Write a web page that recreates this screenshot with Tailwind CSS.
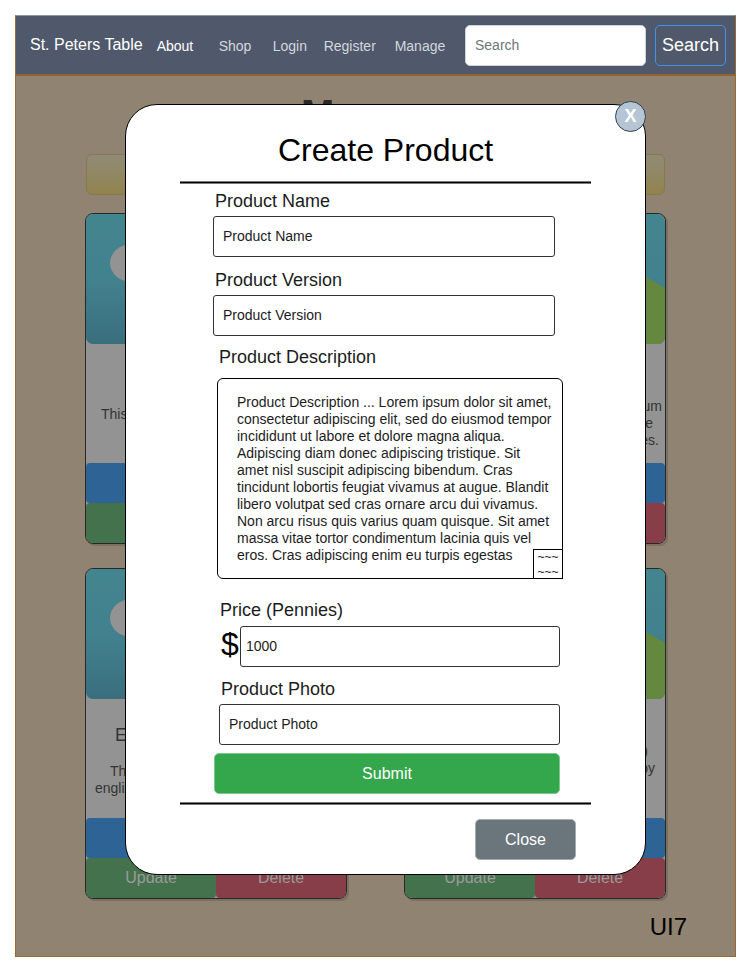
<!DOCTYPE html>
<html lang="en">
<head>
<meta charset="utf-8">
<title>St. Peters Table</title>
<script src="https://cdn.jsdelivr.net/npm/@tailwindcss/browser@4"></script>
</head>
<body class="bg-white p-[15px] font-['Liberation_Sans',Arial,sans-serif] text-[14px] text-black">
<div class="relative border border-[#986a2e] border-t-[#8b999d] bg-[#908372]">

  <header class="flex h-[60px] items-center border-b-2 border-[#93622f] bg-[#50596b] pl-[14px] pr-[9px]">
    <a href="#" class="shrink-0 text-[16px] text-white">St. Peters Table</a>
    <nav class="ml-[14px] flex shrink-0 pt-[2px] text-[#d3d7df]">
      <a href="#" class="w-[62px] text-white">About</a>
      <a href="#" class="w-[54px]">Shop</a>
      <a href="#" class="w-[51px]">Login</a>
      <a href="#" class="w-[71px]">Register</a>
      <a href="#" class="w-[51px]">Manage</a>
    </nav>
    <form class="ml-auto flex min-w-0 gap-[9px]">
      <input type="search" aria-label="Search" placeholder="Search" class="h-[41px] w-[181px] min-w-0 rounded-[5px] border border-[#ced4da] bg-white px-[9px] placeholder:text-[#6c757d]">
      <button type="button" class="h-[41px] w-[71px] shrink-0 rounded-[5px] border border-[#4093f0] text-[18px] text-white">Search</button>
    </form>
  </header>

  <main class="px-[69px] pt-[14px]">
    <h1 class="text-center text-[40px] font-bold leading-[48px] text-[#2b2827]">Manage</h1>
    <div class="mx-px mt-4 h-[41px] rounded-[6px] border border-[#87794f] bg-linear-to-b from-[#908b77] to-[#92834c]"></div>

    <div class="mt-[18px] grid grid-cols-2 gap-x-[57px] gap-y-6 text-[#333333]">
      <article class="flex h-[331px] flex-col overflow-hidden rounded-[8px] border border-[#26292a] bg-[#939393] shadow-[2px_2px_0_#7b7062]">
        <svg class="h-[130px] w-full shrink-0 rounded-[7px]" viewBox="0 0 260 130" preserveAspectRatio="none" aria-hidden="true">
          <defs><linearGradient id="sky" x1="0" y1="0" x2="0" y2="1"><stop offset="0" stop-color="#43858f"/><stop offset=".5" stop-color="#42818e"/><stop offset="1" stop-color="#3a6e7d"/></linearGradient></defs>
          <rect width="260" height="130" fill="url(#sky)"/><ellipse cx="46" cy="49" rx="22" ry="19" fill="#939393"/>
        </svg>
        <p class="grow pl-[15px] pt-[62px] leading-[17px]">This</p>
        <button type="button" class="h-10 rounded-[4px] bg-[#2e6396]" aria-label="View"></button>
        <div class="grid h-10 grid-cols-2 text-[16px] text-[#9a9a9a]"><button type="button" class="rounded-[4px] bg-[#44724d]">Update</button><button type="button" class="rounded-[4px] bg-[#873e49]">Delete</button></div>
      </article>

      <article class="flex h-[331px] flex-col overflow-hidden rounded-[8px] border border-[#26292a] bg-[#939393] shadow-[2px_2px_0_#7b7062]">
        <svg class="h-[130px] w-full shrink-0 rounded-[7px]" viewBox="0 0 260 130" preserveAspectRatio="none" aria-hidden="true">
          <rect width="260" height="130" fill="url(#sky)"/><path d="M130 130 Q180 30 241 63 L260 74 V130Z" fill="#65883f"/>
        </svg>
        <p class="grow pt-[54px] text-right leading-[17px]"><span class="block pr-[3px]">um</span><span class="block pr-[12px]">e</span><span class="block pr-[6px]">es.</span></p>
        <button type="button" class="h-10 rounded-[4px] bg-[#2e6396]" aria-label="View"></button>
        <div class="grid h-10 grid-cols-2 text-[16px] text-[#9a9a9a]"><button type="button" class="rounded-[4px] bg-[#44724d]">Update</button><button type="button" class="rounded-[4px] bg-[#873e49]">Delete</button></div>
      </article>

      <article class="flex h-[331px] flex-col overflow-hidden rounded-[8px] border border-[#26292a] bg-[#939393] shadow-[2px_2px_0_#7b7062]">
        <svg class="h-[130px] w-full shrink-0 rounded-[7px]" viewBox="0 0 260 130" preserveAspectRatio="none" aria-hidden="true">
          <rect width="260" height="130" fill="url(#sky)"/><ellipse cx="46" cy="49" rx="22" ry="19" fill="#939393"/>
        </svg>
        <div class="grow pt-[24px]"><h2 class="pl-[29px] text-[18px] leading-6">E</h2><p class="mt-[16px] leading-[17px]"><span class="block pl-[24px]">Th</span><span class="block pl-[9px]">engli</span></p></div>
        <button type="button" class="h-10 rounded-[4px] bg-[#2e6396]" aria-label="View"></button>
        <div class="grid h-10 grid-cols-2 text-[16px] text-[#9a9a9a]"><button type="button" class="rounded-[4px] bg-[#44724d]">Update</button><button type="button" class="rounded-[4px] bg-[#873e49]">Delete</button></div>
      </article>

      <article class="flex h-[331px] flex-col overflow-hidden rounded-[8px] border border-[#26292a] bg-[#939393] shadow-[2px_2px_0_#7b7062]">
        <svg class="h-[130px] w-full shrink-0 rounded-[7px]" viewBox="0 0 260 130" preserveAspectRatio="none" aria-hidden="true">
          <rect width="260" height="130" fill="url(#sky)"/><path d="M130 130 Q180 30 241 63 L260 74 V130Z" fill="#65883f"/>
        </svg>
        <p class="grow pt-[44px] text-right leading-[17px]"><span class="block pr-[17px]">)</span><span class="block pr-[10px]">by</span></p>
        <button type="button" class="h-10 rounded-[4px] bg-[#2e6396]" aria-label="View"></button>
        <div class="grid h-10 grid-cols-2 text-[16px] text-[#9a9a9a]"><button type="button" class="rounded-[4px] bg-[#44724d]">Update</button><button type="button" class="rounded-[4px] bg-[#873e49]">Delete</button></div>
      </article>
    </div>
  </main>
  <footer class="pb-[13px] pr-[48px] pt-3 text-right text-[24px] leading-8">UI7</footer>

  <!-- Create product dialog -->
  <div class="absolute inset-x-0 top-[88px] flex justify-center pl-5">
    <section role="dialog" aria-labelledby="dialog-title" class="relative w-[521px] rounded-[32px] border border-black bg-white px-[54px] pb-[14px] pt-[25px]">
      <button type="button" aria-label="Close dialog" class="absolute -right-px -top-1 flex size-[31px] items-center justify-center rounded-full border border-[#2c4356] bg-[#b5c5d3] text-[18px] font-bold text-white">X</button>
      <h2 id="dialog-title" class="text-center text-[32px] leading-10">Create Product</h2>
      <div class="mt-[11px] h-[3px] border-y border-[#7a7a7a] bg-black"></div>

      <form class="flex flex-col pt-[5px] text-[#1c1c1c]">
        <div class="flex flex-col gap-[11px] pl-[33px] pr-[36px]">
          <div class="flex flex-col gap-[3px]">
            <label for="name" class="pl-[2px] text-[18px] leading-6">Product Name</label>
            <input id="name" type="text" value="Product Name" class="h-[41px] rounded-[3px] border border-[#333333] px-[9px] pb-[2px]">
          </div>
          <div class="flex flex-col gap-[3px]">
            <label for="version" class="pl-[2px] text-[18px] leading-6">Product Version</label>
            <input id="version" type="text" value="Product Version" class="h-[41px] rounded-[3px] border border-[#333333] px-[9px] pb-[2px]">
          </div>
        </div>

        <div class="mt-[9px] flex flex-col gap-[9px] pl-[37px] pr-[28px]">
          <label for="description" class="pl-[2px] text-[18px] leading-6">Product Description</label>
          <div class="relative flex">
            <textarea id="description" class="h-[201px] w-full resize-none overflow-hidden rounded-[6px] border border-black pb-4 pl-[19px] pr-[8px] pt-[15px] leading-[17px]">Product Description ... Lorem ipsum dolor sit amet, consectetur adipiscing elit, sed do eiusmod tempor incididunt ut labore et dolore magna aliqua. Adipiscing diam donec adipiscing tristique. Sit amet nisl suscipit adipiscing bibendum. Cras tincidunt lobortis feugiat vivamus at augue. Blandit libero volutpat sed cras ornare arcu dui vivamus. Non arcu risus quis varius quam quisque. Sit amet massa vitae tortor condimentum lacinia quis vel eros. Cras adipiscing enim eu turpis egestas</textarea>
            <div class="absolute bottom-0 right-0 h-[30px] w-[30px] border border-black bg-white text-center text-[12px] leading-[15px]" aria-hidden="true">~~~<br>~~~</div>
          </div>
        </div>

        <div class="mt-[19px] flex flex-col gap-[10px] pl-[39px] pr-[31px]">
          <div class="flex flex-col gap-[4px]">
            <label for="price" class="pl-px text-[18px] leading-6">Price (Pennies)</label>
            <div class="flex items-start">
              <span class="w-[21px] shrink-0 pl-[2px] text-[32px] leading-9 text-black">$</span>
              <input id="price" type="text" value="1000" class="h-[41px] min-w-0 grow rounded-[3px] border border-[#333333] px-[5px] pb-[2px]">
            </div>
          </div>
          <div class="flex flex-col gap-[3px]">
            <label for="photo" class="pl-[2px] text-[18px] leading-6">Product Photo</label>
            <input id="photo" type="text" value="Product Photo" class="h-[41px] rounded-[3px] border border-[#333333] px-[9px] pb-[2px]">
          </div>
        </div>

        <div class="mt-[8px] flex pl-[34px] pr-[31px]">
          <button type="button" class="h-[41px] w-full rounded-[5px] border border-[#7cc98d] bg-[#34a64b] text-[16px] text-white">Submit</button>
        </div>
      </form>

      <div class="mt-[8px] h-[3px] border-y border-[#7a7a7a] bg-black"></div>
      <div class="mt-[14px] flex justify-end pr-[15px]">
        <button type="button" class="h-[41px] w-[101px] rounded-[5px] border border-[#a3adb1] bg-[#6b767c] text-[16px] text-white">Close</button>
      </div>
    </section>
  </div>
</div>
</body>
</html>
